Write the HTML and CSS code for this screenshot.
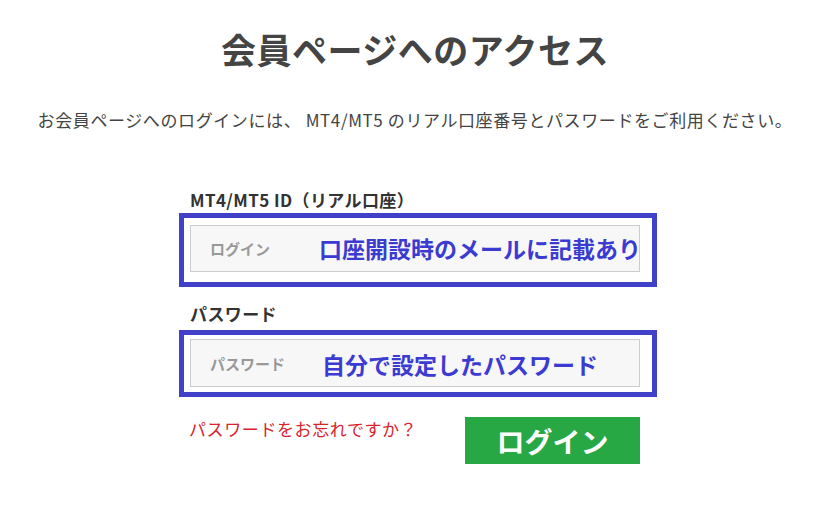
FILE: index.html
```html
<!DOCTYPE html>
<html lang="ja">
<head>
    <meta charset="UTF-8">
    <title>会員ページへのアクセス</title>
    <link rel="stylesheet" href="styles.css">
</head>
<body>
    <div class="page">
        <h1 class="title">会員ページへのアクセス</h1>
        <p class="lead">お会員ページへのログインには、 MT4/MT5 のリアル口座番号とパスワードをご利用ください。</p>

        <form class="login-form">
            <label class="field-label" for="login">MT4/MT5 ID（リアル口座）</label>
            <div class="field field-login">
                <input id="login" class="field-input" type="text" placeholder="ログイン">
                <div class="note note-login"><span>口座開設時のメールに記載あり</span></div>
            </div>

            <label class="field-label" for="password">パスワード</label>
            <div class="field field-password">
                <input id="password" class="field-input" type="password" placeholder="パスワード">
                <div class="note note-password"><span>自分で設定したパスワード</span></div>
            </div>

            <div class="form-foot">
                <a class="forgot" href="#">パスワードをお忘れですか？</a>
                <button class="btn-login" type="button">ログイン</button>
            </div>
        </form>
    </div>
</body>
</html>
```

FILE: styles.css
```css
html,body{
    margin: 0;
    background-color: #fff;
}
body{
    font-family: "Noto Sans CJK JP", "Noto Sans", sans-serif;
    color: #444;
}
.page{
    padding-top: 28px;
}
.title{
    margin: 0;
    font-size: 35px;
    line-height: 42px;
    font-weight: bold;
    letter-spacing: 0.5px;
    text-align: center;
    color: #444;
}
.lead{
    margin: 38px 0 0;
    font-size: 17px;
    line-height: 24px;
    letter-spacing: 0.6px;
    text-align: center;
    color: #444;
}

.login-form{
    width: 450px;
    margin: 57px auto 0;
}
.field-label{
    display: block;
    font-size: 17px;
    line-height: 22px;
    font-weight: bold;
    letter-spacing: 0.4px;
    color: #333;
    margin-bottom: 14px;
}
.field{
    position: relative;
    height: 47px;
    margin-bottom: 31px;
}
.field-password{
    height: 48px;
    margin-top: 2px;
    margin-bottom: 30px;
}
.field-input{
    box-sizing: border-box;
    width: 100%;
    height: 100%;
    padding: 0 19px;
    border: 1px solid #ccc;
    background-color: #f7f7f7;
    font-family: inherit;
    font-size: 15px;
    font-weight: bold;
    outline: none;
}
.field-input::placeholder{
    color: #999;
}

/* blue annotation frame drawn over the input */
.note{
    position: absolute;
    left: -11px;
    right: -17px;
    border: 5px solid #4040c9;
    display: flex;
    align-items: center;
    pointer-events: none;
}
.note-login{
    top: -12px;
    bottom: -15px;
}
.note-password{
    top: -9px;
    bottom: -10px;
}
.note span{
    font-size: 23px;
    font-weight: bold;
    color: #3b3bd2;
    line-height: 1;
}
.note-login span{
    margin-left: 135px;
    margin-top: -3px;
}
.note-password span{
    margin-left: 138px;
    margin-top: 1px;
}

.form-foot{
    display: flex;
    justify-content: space-between;
    align-items: flex-start;
}
.forgot{
    margin-left: -1px;
    font-size: 17px;
    line-height: 24px;
    letter-spacing: 0.6px;
    color: #d9232d;
    text-decoration: none;
}
.btn-login{
    width: 175px;
    height: 47px;
    border: 0;
    background-color: #28a745;
    color: #fff;
    font-family: inherit;
    font-size: 28px;
    font-weight: bold;
    line-height: 1;
    padding: 0;
}
```
